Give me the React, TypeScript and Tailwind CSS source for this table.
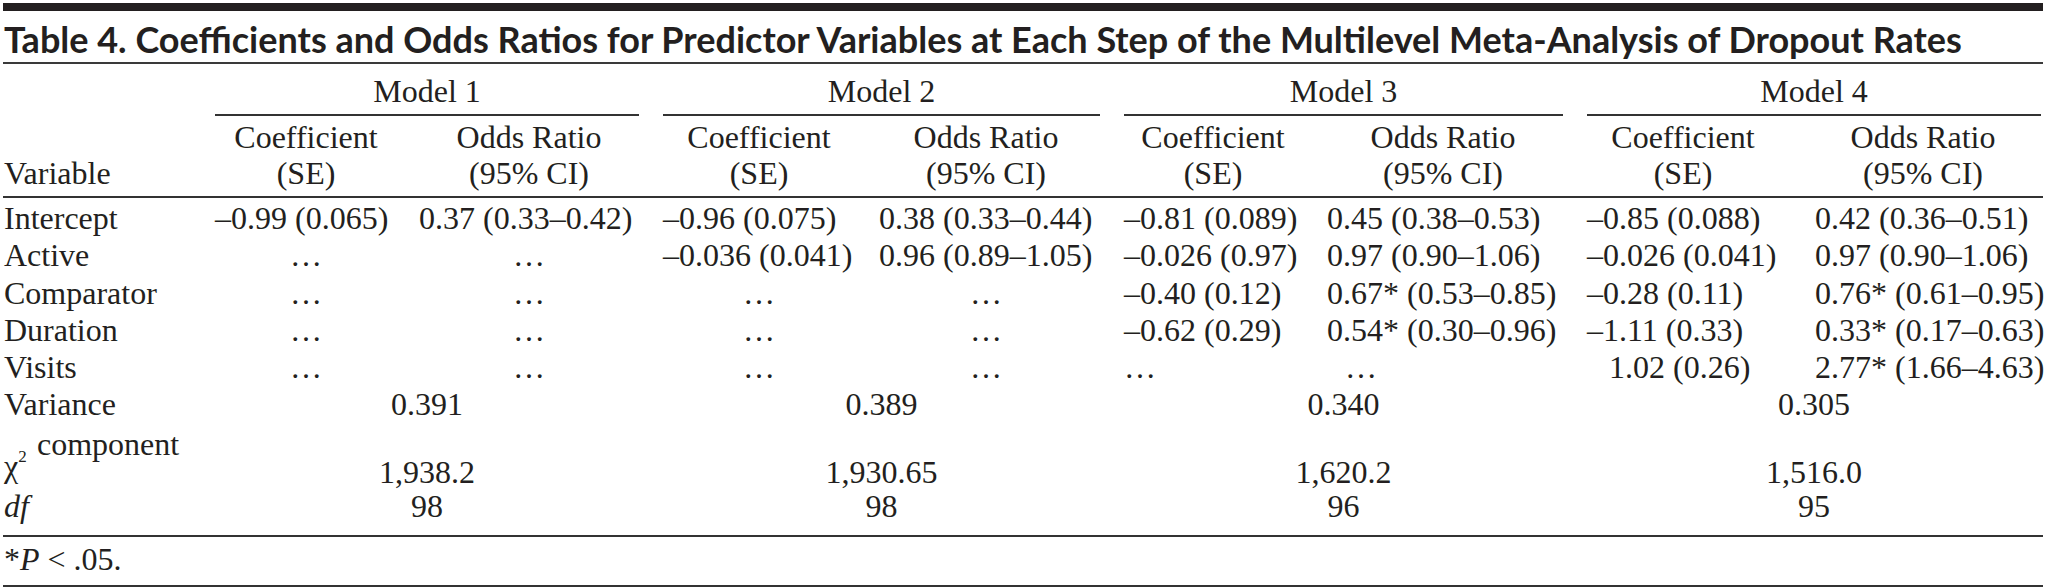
import React from "react";

const cols =
  "grid grid-cols-[212px_204px_244px_216px_245px_203px_260px_228px_228px]";

const DOTS = "…";

// header text is centred in a box of this width from the column start
const coefBox = ["w-[182px]", "w-[192px]", "w-[178px]", "w-[192px]"];
const orBox = ["w-[220px]", "w-[214px]", "w-[232px]", "w-[216px]"];
const groupGap = ["mr-[24px]", "mr-[24px]", "mr-[24px]", "mr-[2px]"];

type Cell = string | { text: string; cls: string };

const rows: { label: string; cells: Cell[] }[] = [
  {
    label: "Intercept",
    cells: [
      "–0.99 (0.065)",
      "0.37 (0.33–0.42)",
      "–0.96 (0.075)",
      "0.38 (0.33–0.44)",
      "–0.81 (0.089)",
      "0.45 (0.38–0.53)",
      "–0.85 (0.088)",
      "0.42 (0.36–0.51)",
    ],
  },
  {
    label: "Active",
    cells: [
      DOTS,
      DOTS,
      "–0.036 (0.041)",
      "0.96 (0.89–1.05)",
      "–0.026 (0.97)",
      "0.97 (0.90–1.06)",
      "–0.026 (0.041)",
      "0.97 (0.90–1.06)",
    ],
  },
  {
    label: "Comparator",
    cells: [
      DOTS,
      DOTS,
      DOTS,
      DOTS,
      "–0.40 (0.12)",
      "0.67* (0.53–0.85)",
      "–0.28 (0.11)",
      "0.76* (0.61–0.95)",
    ],
  },
  {
    label: "Duration",
    cells: [
      DOTS,
      DOTS,
      DOTS,
      DOTS,
      "–0.62 (0.29)",
      "0.54* (0.30–0.96)",
      "–1.11 (0.33)",
      "0.33* (0.17–0.63)",
    ],
  },
  {
    label: "Visits",
    cells: [
      DOTS,
      DOTS,
      DOTS,
      DOTS,
      { text: DOTS, cls: "" },
      { text: DOTS, cls: "pl-[18px]" },
      { text: "1.02 (0.26)", cls: "pl-[22px]" },
      "2.77* (1.66–4.63)",
    ],
  },
];

const variance = ["0.391", "0.389", "0.340", "0.305"];
const chi = ["1,938.2", "1,930.65", "1,620.2", "1,516.0"];
const df = ["98", "98", "96", "95"];

function DataCell({ cell, i }: { cell: Cell; i: number }) {
  if (typeof cell !== "string") {
    return <div className={`whitespace-nowrap ${cell.cls}`}>{cell.text}</div>;
  }
  if (cell === DOTS) {
    const box = i % 2 === 0 ? coefBox[i / 2] : orBox[(i - 1) / 2];
    return <div className={`${box} text-center`}>{DOTS}</div>;
  }
  return <div className="whitespace-nowrap">{cell}</div>;
}

export default function App() {
  return (
    <div className="w-[2048px] h-[588px] overflow-hidden bg-white text-[#231f20]">
      <div className="ml-[3px] w-[2040px] pt-[3px]">
        <div className="h-[8px] bg-[#231f20]" />

        <h1 className="border-b-2 border-[#3a3a3a] pb-px pl-px pt-[6px] font-['Lato',sans-serif] text-[36px] font-bold leading-[44px] whitespace-nowrap">
          Table 4. Coefficients and Odds Ratios for Predictor Variables at Each Step of the Multilevel Meta-Analysis of Dropout Rates
        </h1>

        <div className="font-['Liberation_Serif','Times_New_Roman',serif] text-[32px]">
          {/* column headings */}
          <div className={`${cols} border-b-2 border-[#333] pb-[5px] leading-[36px]`}>
            <div className="row-span-2 self-end pl-px">Variable</div>
            {[1, 2, 3, 4].map((m, g) => (
              <div
                key={m}
                className={`col-span-2 ${groupGap[g]} border-b-2 border-[#333] pb-[5px] pt-[9px] text-center`}
              >
                Model {m}
              </div>
            ))}
            {[0, 1, 2, 3].map((g) => (
              <React.Fragment key={g}>
                <div className={`${coefBox[g]} mt-[3px] text-center`}>
                  Coefficient
                  <br />
                  (SE)
                </div>
                <div className={`${orBox[g]} mt-[3px] text-center`}>
                  Odds Ratio
                  <br />
                  (95% CI)
                </div>
              </React.Fragment>
            ))}
          </div>

          {/* body */}
          <div className="border-b-2 border-[#333] pt-[2px]">
            {rows.map((r) => (
              <div key={r.label} className={`${cols} h-[37.25px] leading-[37.25px]`}>
                <div className="pl-px">{r.label}</div>
                {r.cells.map((c, i) => (
                  <DataCell key={i} cell={c} i={i} />
                ))}
              </div>
            ))}

            <div className={`${cols} h-[37.25px] leading-[37.25px]`}>
              <div className="pl-px">Variance</div>
              {variance.map((v, g) => (
                <div key={g} className={`col-span-2 ${groupGap[g]} text-center`}>
                  {v}
                </div>
              ))}
            </div>

            <div className={`${cols} leading-[12px]`}>
              <div className="pl-px pt-[5px]">
                <div className="pl-[33px] leading-[31px]">component</div>
                <div>
                  χ<span className="relative -top-[15px] text-[17px]">2</span>
                </div>
              </div>
              {chi.map((v, g) => (
                <div key={g} className={`col-span-2 ${groupGap[g]} self-end text-center`}>
                  {v}
                </div>
              ))}
            </div>

            <div className={`${cols} leading-[57.25px]`}>
              <div className="pl-px italic">df</div>
              {df.map((v, g) => (
                <div key={g} className={`col-span-2 ${groupGap[g]} text-center`}>
                  {v}
                </div>
              ))}
            </div>
          </div>

          {/* footnote */}
          <div className="border-b-2 border-[#333] pb-[8px] pl-px pt-[4px] leading-[36px]">
            *<i>P</i> &lt; .05.
          </div>
        </div>
      </div>
    </div>
  );
}
